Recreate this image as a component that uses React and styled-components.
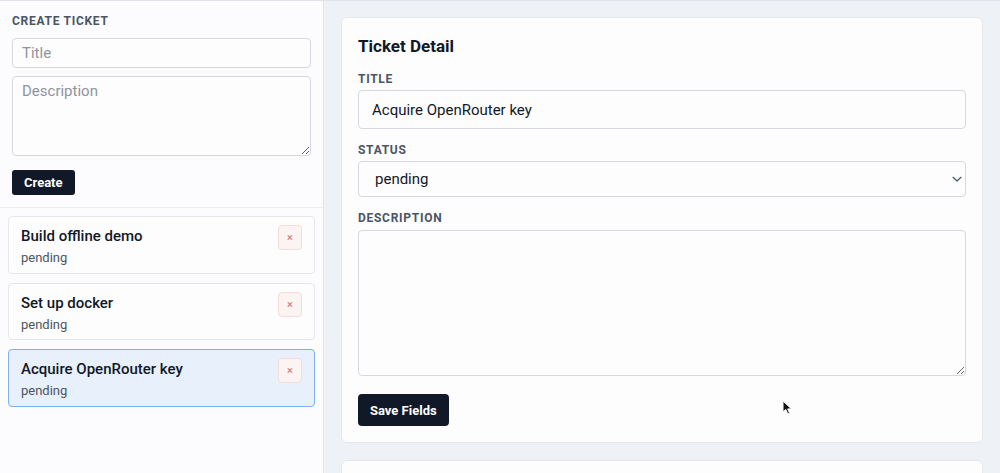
import React, { useState } from "react";
import styled, { createGlobalStyle } from "styled-components";

const Global = createGlobalStyle`
  * { box-sizing: border-box; }
  html, body { margin: 0; padding: 0; }
  body {
    font-family: Roboto, "Liberation Sans", sans-serif;
    color: #111827;
    background: #eef2f7;
  }
`;

const Layout = styled.div`
  display: grid;
  grid-template-columns: 324px 1fr;
  height: 473px;
  border-top: 1px solid #dfe3e9;
  overflow: hidden;
`;

const Sidebar = styled.aside`
  background: #fcfcfe;
  border-right: 1px solid #e2e6ec;
  display: flex;
  flex-direction: column;
`;

const CreateForm = styled.form`
  display: flex;
  flex-direction: column;
  padding: 12px 12px 12px;
  border-bottom: 1px solid #eceef2;
`;

const SectionLabel = styled.div`
  font-size: 12px;
  font-weight: 700;
  letter-spacing: 0.06em;
  text-transform: uppercase;
  color: #4b5563;
  line-height: 16px;
  margin-bottom: ${(p) => p.$mb || 8}px;
`;

const TextInput = styled.input`
  width: 100%;
  height: ${(p) => p.$h || 30}px;
  border: 1px solid #d5d8de;
  border-radius: 4px;
  background: #fdfdfe;
  padding: 0 ${(p) => p.$px || 9}px;
  font: inherit;
  font-size: 15px;
  color: #111827;
  outline: none;
  &::placeholder { color: #8f949c; }
`;

const TextArea = styled.textarea`
  width: 100%;
  height: ${(p) => p.$h || 80}px;
  border: 1px solid #d5d8de;
  border-radius: 4px;
  background: #fdfdfe;
  padding: 5px 9px;
  font: inherit;
  font-size: 15px;
  color: #111827;
  outline: none;
  resize: vertical;
  display: block;
  &::placeholder { color: #8f949c; }
`;

const DarkButton = styled.button`
  align-self: flex-start;
  background: #111827;
  color: #fff;
  border: none;
  border-radius: ${(p) => p.$r || 3}px;
  height: ${(p) => p.$h || 25}px;
  padding: 0 ${(p) => p.$px || 12}px;
  font: inherit;
  font-size: 13px;
  font-weight: 700;
  cursor: pointer;
`;

const Stack = styled.div`
  display: flex;
  flex-direction: column;
  gap: ${(p) => p.$gap || 8}px;
  margin-top: ${(p) => p.$mt || 0}px;
`;

const TicketList = styled.ul`
  list-style: none;
  margin: 0;
  padding: 8px;
  display: flex;
  flex-direction: column;
  gap: 9px;
`;

const TicketCard = styled.li`
  display: flex;
  justify-content: space-between;
  align-items: flex-start;
  padding: 9px 12px 8px;
  border-radius: 4px;
  border: 1px solid ${(p) => (p.$active ? "#7fb0f2" : "#e4e7eb")};
  background: ${(p) => (p.$active ? "#e8f0fb" : "#fdfdfe")};
  cursor: pointer;
  height: 57.5px;
`;

const TicketInfo = styled.div`
  display: flex;
  flex-direction: column;
`;

const TicketTitle = styled.div`
  font-size: 15px;
  font-weight: 500;
  line-height: 20px;
  color: #111827;
`;

const TicketStatus = styled.div`
  font-size: 13px;
  line-height: 17px;
  margin-top: 3px;
  color: #4b5563;
`;

const DeleteButton = styled.button`
  width: 24px;
  height: 25px;
  margin-top: -1px;
  border: 1px solid #f7dada;
  background: #fcf3f3;
  border-radius: 4px;
  color: #d66a6a;
  font: inherit;
  font-size: 11px;
  line-height: 1;
  padding: 0;
  display: flex;
  align-items: center;
  justify-content: center;
  cursor: pointer;
`;

const Main = styled.main`
  padding: 16px 17px 17px;
  display: flex;
  flex-direction: column;
  gap: 17px;
`;

const Panel = styled.section`
  background: #fdfdfe;
  border: 1px solid #e5e8ed;
  border-radius: 6px;
  padding: 16px 16px 16px;
  display: flex;
  flex-direction: column;
  flex-shrink: 0;
  min-height: ${(p) => p.$minH || 0}px;
`;

const PanelTitle = styled.h2`
  margin: 0 0 13px;
  font-size: 17px;
  font-weight: 700;
  line-height: 24px;
  color: #111827;
`;

const Field = styled.div`
  display: flex;
  flex-direction: column;
  margin-bottom: ${(p) => p.$mb || 13}px;
`;

const SelectWrap = styled.div`
  position: relative;
`;

const Select = styled.select`
  appearance: none;
  -webkit-appearance: none;
  width: 100%;
  height: 36px;
  border: 1px solid #d5d8de;
  border-radius: 4px;
  background: #fdfdfe;
  padding: 0 16px;
  font: inherit;
  font-size: 15px;
  color: #111827;
  outline: none;
`;

const Chevron = styled.svg`
  position: absolute;
  right: 0;
  top: 50%;
  transform: translateY(-50%);
  pointer-events: none;
`;

const Cursor = styled.svg`
  position: absolute;
  left: 782px;
  top: 400px;
  pointer-events: none;
`;

const initial = [
  { id: 1, title: "Build offline demo", status: "pending" },
  { id: 2, title: "Set up docker", status: "pending" },
  { id: 3, title: "Acquire OpenRouter key", status: "pending" },
];

export default function App() {
  const [tickets, setTickets] = useState(initial);
  const [selected, setSelected] = useState(3);
  const current = tickets.find((t) => t.id === selected) || tickets[0];

  return (
    <>
      <Global />
      <Layout>
        <Sidebar>
          <CreateForm onSubmit={(e) => e.preventDefault()}>
            <SectionLabel $mb={9}>Create Ticket</SectionLabel>
            <Stack $gap={8}>
              <TextInput placeholder="Title" />
              <TextArea placeholder="Description" />
            </Stack>
            <Stack $mt={14}>
              <DarkButton type="submit">Create</DarkButton>
            </Stack>
          </CreateForm>
          <TicketList>
            {tickets.map((t) => (
              <TicketCard
                key={t.id}
                $active={t.id === selected}
                onClick={() => setSelected(t.id)}
              >
                <TicketInfo>
                  <TicketTitle>{t.title}</TicketTitle>
                  <TicketStatus>{t.status}</TicketStatus>
                </TicketInfo>
                <DeleteButton
                  onClick={(e) => {
                    e.stopPropagation();
                    setTickets(tickets.filter((x) => x.id !== t.id));
                  }}
                >
                  ×
                </DeleteButton>
              </TicketCard>
            ))}
          </TicketList>
        </Sidebar>
        <Main>
          <Panel>
            <PanelTitle>Ticket Detail</PanelTitle>
            <Field>
              <SectionLabel $mb={3}>Title</SectionLabel>
              <TextInput
                $h={39}
                $px={13}
                defaultValue={current ? current.title : ""}
                key={current ? current.id : 0}
              />
            </Field>
            <Field>
              <SectionLabel $mb={3}>Status</SectionLabel>
              <SelectWrap>
                <Select defaultValue="pending">
                  <option value="pending">pending</option>
                  <option value="in progress">in progress</option>
                  <option value="done">done</option>
                </Select>
                <Chevron width="18" height="18" viewBox="0 0 18 18">
                  <path
                    d="M5 7.3 L9 11 L13 7.3"
                    fill="none"
                    stroke="#4b5563"
                    strokeWidth="1.2"
                    strokeLinecap="round"
                    strokeLinejoin="round"
                  />
                </Chevron>
              </SelectWrap>
            </Field>
            <Field $mb={18}>
              <SectionLabel $mb={4}>Description</SectionLabel>
              <TextArea $h={146} />
            </Field>
            <DarkButton $h={32} $px={12} $r={4}>
              Save Fields
            </DarkButton>
          </Panel>
          <Panel $minH={60} />
        </Main>
      </Layout>
      <Cursor width="12" height="16" viewBox="0 0 12 16">
        <path
          d="M1 1 L1 12 L3.8 9.5 L5.8 14 L7.6 13.2 L5.7 8.9 L9.5 8.9 Z"
          fill="#111"
          stroke="#fff"
          strokeWidth="1"
        />
      </Cursor>
    </>
  );
}
